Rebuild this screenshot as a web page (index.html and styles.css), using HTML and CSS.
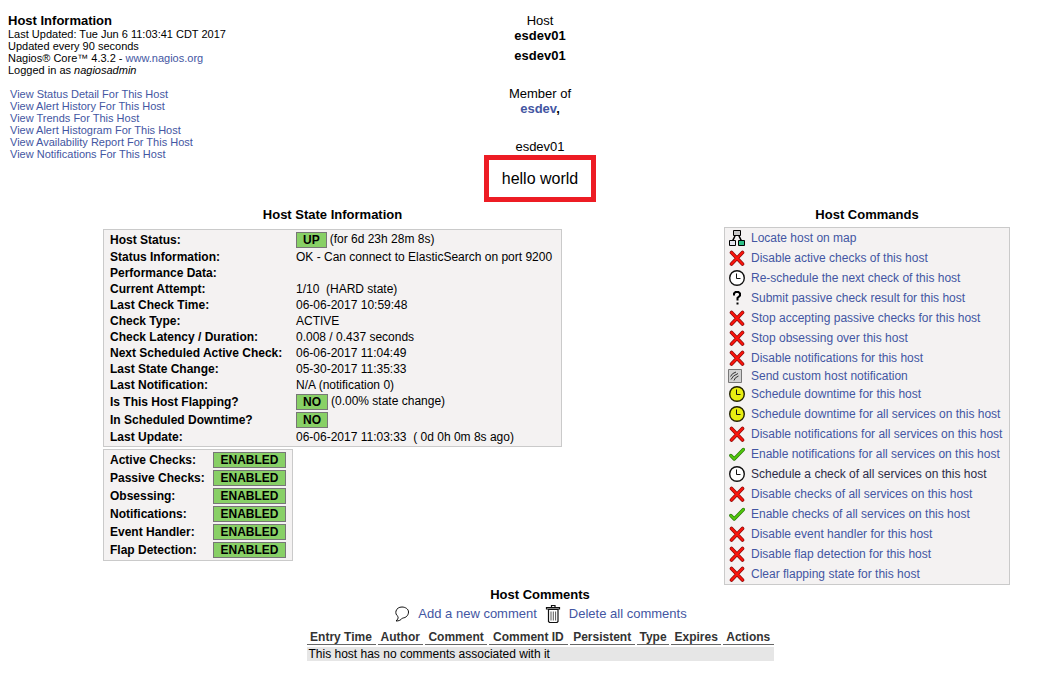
FILE: index.html
```
<!DOCTYPE html>
<html lang="en">
<head>
<meta charset="utf-8">
<title>Host Information</title>
<link rel="stylesheet" href="styles.css">
</head>
<body>
<svg class="sprite" aria-hidden="true">
  <symbol id="cross" viewBox="0 0 16 16"><path d="M2.500 2.500l11 11.500M13.500 2.500L2.500 14" stroke="#8a0a0a" stroke-width="3.600" stroke-linecap="round"/><path d="M2.500 2.500l11 11.500M13.500 2.500L2.500 14" stroke="#fa140c" stroke-width="2.200" stroke-linecap="round"/></symbol>
  <symbol id="tick" viewBox="0 0 16 16"><path d="M1.800 9.500l3.400 3.500L14.400 3.500" fill="none" stroke="#2a7a08" stroke-width="3.300" stroke-linecap="round" stroke-linejoin="round"/><path d="M1.800 9.500l3.400 3.500L14.400 3.500" fill="none" stroke="#52c80c" stroke-width="1.900" stroke-linecap="round"/></symbol>
  <symbol id="clock" viewBox="0 0 16 16"><circle cx="8" cy="8" r="7.300" fill="#fff" stroke="#111" stroke-width="1.400"/><path d="M7.500 3.500v5h4" fill="none" stroke="#111"/></symbol>
  <symbol id="downtime" viewBox="0 0 16 16"><circle cx="8" cy="8" r="7.300" fill="#e8ee12" stroke="#222200" stroke-width="1.400"/><path d="M7.500 3.500v5h4" fill="none" stroke="#111"/></symbol>
  <symbol id="question" viewBox="0 0 16 16"><path d="M5 5.500V3.500L6.500 2h3L11 3.500v2L8.500 8v2.500" fill="none" stroke="#000" stroke-width="2"/><path d="M7.500 12.500h2v2h-2z"/></symbol>
  <symbol id="map" viewBox="0 0 16 16"><path d="M6 6L3.500 11M10 6l2.500 5" stroke="#000" stroke-width="1.600"/><path d="M4.500.5h7v5h-7z" fill="#c8c8c8" stroke="#000"/><path d="M.5 10.500h6v5h-6z" fill="#e4e4ee" stroke="#000"/><path d="M9.500 10.500h6v5h-6z" fill="#2fc088" stroke="#000"/></symbol>
  <symbol id="notify" viewBox="0 0 14 14"><path d="M.5.5h13v13H.5z" fill="#d2d2d2" stroke="#777"/><path d="M2.500 7.500Q4 4 8 3M3 10.500Q4.500 6.500 10 4.500M6 11.500Q6.500 8.500 10.500 7" fill="none" stroke="#333"/></symbol>
  <symbol id="bubble" viewBox="0 0 16 16"><path d="M4 10.500C2 9 1.500 7 2 5c.8-2.500 3-4 6-4s6.500 1.800 6.500 5-2.500 6-6 6c-1.500 2-3.500 3-6.500 3 1.500-1.500 2.500-2.500 2-4.500z" fill="#fff" stroke="#111"/></symbol>
  <symbol id="trash" viewBox="0 0 16 18"><path d="M3.500 4.500h9.500v12l-1 1h-7.500l-1-1zM1.500 4V2.500h13V4zM6.500 2V.5h3.500V2" fill="#fff" stroke="#111" stroke-width="1.200"/><path d="M6 6.500v9M8.300 6.500v9M10.600 6.500v9" stroke="#555"/></symbol>
</svg>
<div class="page">
  <header class="top">
    <div class="intro">
      <h1 class="title">Host Information</h1>
      <div>Last Updated: Tue Jun 6 11:03:41 CDT 2017</div>
      <div>Updated every 90 seconds</div>
      <div>Nagios® Core™ 4.3.2 - <a href="#">www.nagios.org</a></div>
      <div>Logged in as <i>nagiosadmin</i></div>
      <nav class="views">
        <a href="#">View Status Detail For This Host</a>
        <a href="#">View Alert History For This Host</a>
        <a href="#">View Trends For This Host</a>
        <a href="#">View Alert Histogram For This Host</a>
        <a href="#">View Availability Report For This Host</a>
        <a href="#">View Notifications For This Host</a>
      </nav>
    </div>
    <div class="host">
      <div>Host</div>
      <div class="strong">esdev01</div>
      <div class="strong alias">esdev01</div>
      <div class="member">Member of</div>
      <div class="strong"><a href="#">esdev</a>,</div>
      <div class="address">esdev01</div>
      <div class="note">hello world</div>
    </div>
  </header>

  <main class="panels">
    <section>
      <h2 class="title center state-title">Host State Information</h2>
      <table class="box state">
        <tr><th scope="row">Host Status:</th><td><span class="badge">UP</span>(for 6d 23h 28m 8s)</td></tr>
        <tr><th scope="row">Status Information:</th><td>OK - Can connect to ElasticSearch on port 9200</td></tr>
        <tr><th scope="row">Performance Data:</th><td></td></tr>
        <tr><th scope="row">Current Attempt:</th><td>1/10&nbsp; (HARD state)</td></tr>
        <tr><th scope="row">Last Check Time:</th><td>06-06-2017 10:59:48</td></tr>
        <tr><th scope="row">Check Type:</th><td>ACTIVE</td></tr>
        <tr><th scope="row">Check Latency / Duration:</th><td>0.008 / 0.437 seconds</td></tr>
        <tr><th scope="row">Next Scheduled Active Check:</th><td>06-06-2017 11:04:49</td></tr>
        <tr><th scope="row">Last State Change:</th><td>05-30-2017 11:35:33</td></tr>
        <tr><th scope="row">Last Notification:</th><td>N/A (notification 0)</td></tr>
        <tr><th scope="row">Is This Host Flapping?</th><td><span class="badge">NO</span>(0.00% state change)</td></tr>
        <tr><th scope="row">In Scheduled Downtime?</th><td><span class="badge">NO</span></td></tr>
        <tr><th scope="row">Last Update:</th><td>06-06-2017 11:03:33&nbsp; ( 0d 0h 0m 8s ago)</td></tr>
      </table>
      <table class="box checks">
        <tr><th scope="row">Active Checks:</th><td><span class="badge">ENABLED</span></td></tr>
        <tr><th scope="row">Passive Checks:</th><td><span class="badge">ENABLED</span></td></tr>
        <tr><th scope="row">Obsessing:</th><td><span class="badge">ENABLED</span></td></tr>
        <tr><th scope="row">Notifications:</th><td><span class="badge">ENABLED</span></td></tr>
        <tr><th scope="row">Event Handler:</th><td><span class="badge">ENABLED</span></td></tr>
        <tr><th scope="row">Flap Detection:</th><td><span class="badge">ENABLED</span></td></tr>
      </table>
    </section>
    <section>
      <h2 class="title center command-title">Host Commands</h2>
      <ul class="box commands">
        <li><svg class="icon"><use href="#map"/></svg><a href="#">Locate host on map</a></li>
        <li><svg class="icon"><use href="#cross"/></svg><a href="#">Disable active checks of this host</a></li>
        <li><svg class="icon"><use href="#clock"/></svg><a href="#">Re-schedule the next check of this host</a></li>
        <li><svg class="icon"><use href="#question"/></svg><a href="#">Submit passive check result for this host</a></li>
        <li><svg class="icon"><use href="#cross"/></svg><a href="#">Stop accepting passive checks for this host</a></li>
        <li><svg class="icon"><use href="#cross"/></svg><a href="#">Stop obsessing over this host</a></li>
        <li><svg class="icon"><use href="#cross"/></svg><a href="#">Disable notifications for this host</a></li>
        <li class="short"><svg class="icon small"><use href="#notify"/></svg><a href="#">Send custom host notification</a></li>
        <li><svg class="icon"><use href="#downtime"/></svg><a href="#">Schedule downtime for this host</a></li>
        <li><svg class="icon"><use href="#downtime"/></svg><a href="#">Schedule downtime for all services on this host</a></li>
        <li><svg class="icon"><use href="#cross"/></svg><a href="#">Disable notifications for all services on this host</a></li>
        <li><svg class="icon"><use href="#tick"/></svg><a href="#">Enable notifications for all services on this host</a></li>
        <li><svg class="icon"><use href="#clock"/></svg><a href="#" class="active">Schedule a check of all services on this host</a></li>
        <li><svg class="icon"><use href="#cross"/></svg><a href="#">Disable checks of all services on this host</a></li>
        <li><svg class="icon"><use href="#tick"/></svg><a href="#">Enable checks of all services on this host</a></li>
        <li><svg class="icon"><use href="#cross"/></svg><a href="#">Disable event handler for this host</a></li>
        <li><svg class="icon"><use href="#cross"/></svg><a href="#">Disable flap detection for this host</a></li>
        <li><svg class="icon"><use href="#cross"/></svg><a href="#">Clear flapping state for this host</a></li>
      </ul>
    </section>
  </main>

  <section class="comments">
    <h2 class="title">Host Comments</h2>
    <div class="actions">
      <svg class="icon"><use href="#bubble"/></svg><a href="#">Add a new comment</a>
      <svg class="icon trash"><use href="#trash"/></svg><a href="#">Delete all comments</a>
    </div>
    <table class="list">
      <thead><tr><th>Entry Time</th><th>Author</th><th>Comment</th><th>Comment ID</th><th>Persistent</th><th>Type</th><th>Expires</th><th>Actions</th></tr></thead>
      <tbody><tr><td colspan="9">This host has no comments associated with it</td></tr></tbody>
    </table>
  </section>
</div>
</body>
</html>
```
FILE: styles.css
```
body {
  margin: 0;
  background: #fff;
  color: #000;
  font: 12px/16px "Liberation Sans", Arial, sans-serif;
}
a { color: #4356a2; text-decoration: none; }
a.active { color: #2c2c48; }
.sprite { display: none; }
.page { padding: 13px 0 16px 40px; }
.title { margin: 0; font-size: 13px; line-height: 15px; font-weight: bold; }
.center { text-align: center; }

.top {
  display: grid;
  grid-template-columns: 1fr auto 1fr;
}
.intro { margin-left: -32px; font-size: 11px; line-height: 12px; }
.views { display: flex; flex-direction: column; align-items: flex-start; margin-top: 12px; padding-left: 2px; }
.host { font-size: 13px; line-height: 15px; text-align: center; }
.strong { font-weight: bold; }
.alias { margin-top: 5px; }
.member { margin-top: 23px; }
.address { margin-top: 23px; }
.note { margin-top: 1px; padding: 8px 13px; border: 5px solid #ed1c24; font-size: 16px; line-height: 21px; }

.panels {
  display: flex;
  justify-content: space-between;
  align-items: flex-start;
  padding: 5px 30px 2px 63px;
}
.state-title { margin-bottom: 7px; }
.command-title { margin-bottom: 5px; }
.box { background: #f4f2f2; border: 1px solid #cacaca; }
table.box { border-spacing: 0; padding: 1px; }
.box th, .box td { height: 16px; padding: 0; text-align: left; white-space: nowrap; }
.state { width: 459px; }
.state th, .checks th { padding-left: 5px; }
.state th { width: 186px; }
.checks { width: 190px; margin-top: 2px; }
.checks th { width: 103px; }
.badge {
  display: inline-block;
  margin: 1px 3px 1px 0;
  padding: 0 6px;
  border: 1px solid #777;
  background: #88d066;
  font-weight: bold;
  line-height: 14px;
  vertical-align: top;
}
.checks .badge { width: 59px; text-align: center; }

.commands { min-width: 279px; margin: 0; padding: 0 2px 0 3px; list-style: none; }
.commands li { display: flex; align-items: center; gap: 6px; height: 20px; white-space: nowrap; }
.commands .short { height: 16px; }
.icon { flex: none; width: 16px; height: 16px; margin-left: 1px; }
.small { width: 14px; height: 14px; margin: 0 3px 0 0; }

.comments { display: flex; flex-direction: column; align-items: center; }
.actions { display: flex; align-items: center; gap: 8px; height: 20px; margin-top: 2px; font-size: 13px; }
.trash { height: 18px; margin-left: 0; }
.list { min-width: 471px; border-spacing: 2px; margin-top: 4px; }
.list th { padding: 0 2px; border-bottom: 1px solid #666; color: #333; line-height: 14px; }
.list td { padding: 0 2px; background: #e6e6e6; line-height: 14px; }
```
